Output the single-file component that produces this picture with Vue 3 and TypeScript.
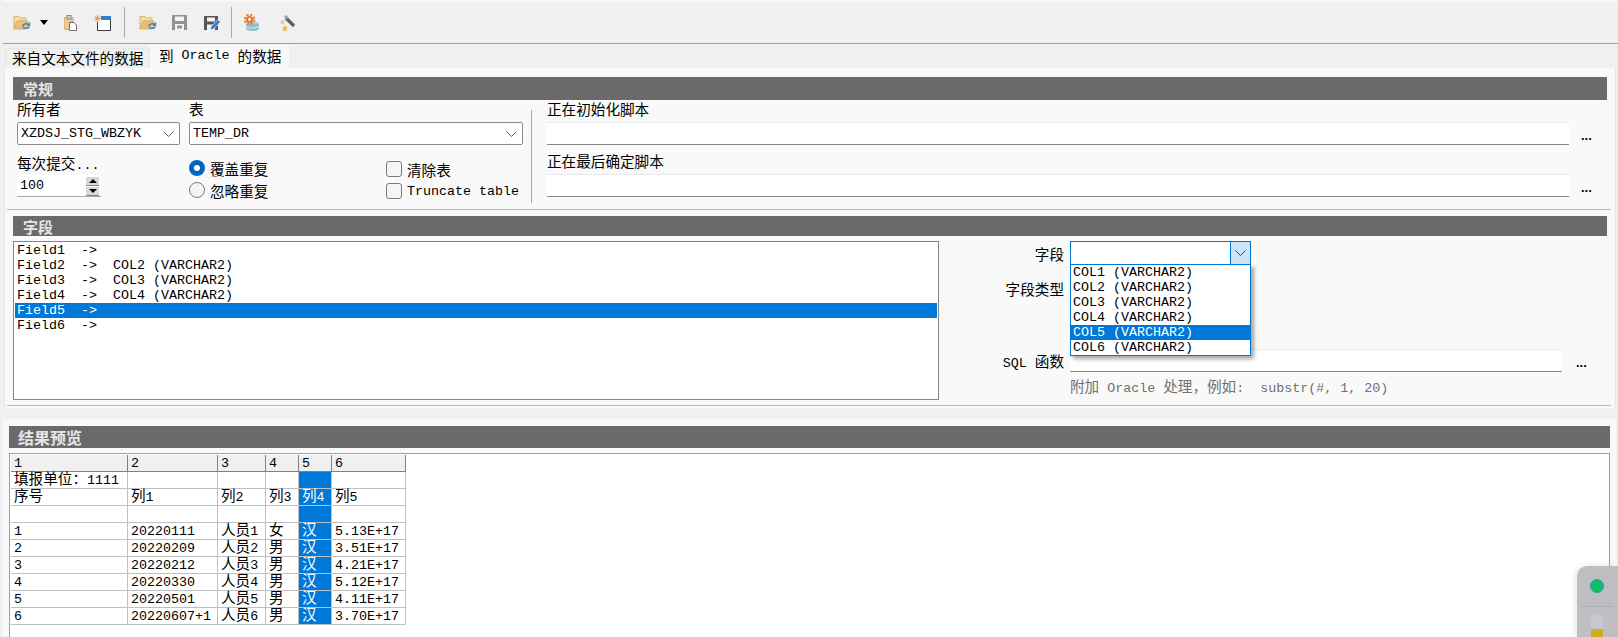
<script setup lang="ts">
type Seg = { t: string; c: string }
const segs = (text: string): Seg[] => {
  const out: Seg[] = []
  for (const m of text.matchAll(/[\u3000-\u9fff\uff00-\uffef]+|[^\u3000-\u9fff\uff00-\uffef]+/g)) {
    out.push({ t: m[0], c: /[\u3000-\u9fff\uff00-\uffef]/.test(m[0]) ? 'cjk' : 'lat' })
  }
  return out
}
const fields = [
  'Field1  ->',
  'Field2  ->  COL2 (VARCHAR2)',
  'Field3  ->  COL3 (VARCHAR2)',
  'Field4  ->  COL4 (VARCHAR2)',
  'Field5  ->',
  'Field6  ->',
]
const cols = ['COL1', 'COL2', 'COL3', 'COL4', 'COL5', 'COL6'].map((c) => `${c} (VARCHAR2)`)
const widths = [117, 90, 48, 33, 33, 74]
const head = ['1', '2', '3', '4', '5', '6']
const rows = [
  ['填报单位：1111', '', '', '', '', ''],
  ['序号', '列1', '列2', '列3', '列4', '列5'],
  ['', '', '', '', '', ''],
  ['1', '20220111', '人员1', '女', '汉', '5.13E+17'],
  ['2', '20220209', '人员2', '男', '汉', '3.51E+17'],
  ['3', '20220212', '人员3', '男', '汉', '4.21E+17'],
  ['4', '20220330', '人员4', '男', '汉', '5.12E+17'],
  ['5', '20220501', '人员5', '男', '汉', '4.11E+17'],
  ['6', '20220607+1', '人员6', '男', '汉', '3.70E+17'],
]
</script>

<template>
  <div class="app">
    <div class="toolbar">
      <svg class="ic folder" width="18" height="15" viewBox="0 0 18 15">
        <path d="M1 3.5V1.5H6L7.5 3H13V6H5L1 14Z" fill="#f3dcae" stroke="#dcb168" />
        <path d="M1 14L4 6H15L12.5 14Z" fill="#e9bf78" stroke="#dcb168" />
        <path d="M9.5 11.5C10.5 8.5 13.5 8 16 9.5M16.5 7.5V10H14M10 12.5C12 14 15 13.5 16.5 11.5" fill="none" stroke="#2f7fc1" stroke-width="1.4" />
      </svg>
      <span class="caret"></span>
      <svg class="ic clip" width="13" height="16" viewBox="0 0 13 16">
        <path d="M0.5 2.5H9.5V7H5.5V14.5H0.5Z" fill="#eccb92" stroke="#ddb574" />
        <rect x="3" y="0.5" width="4" height="3.5" fill="#d5d5d5" stroke="#8a8a8a" />
        <path d="M5.5 7.5H10L12.5 10V15.5H5.5Z" fill="#fff" stroke="#707070" />
      </svg>
      <svg class="ic newwin" width="17" height="16" viewBox="0 0 17 16">
        <rect x="3.5" y="3.5" width="13" height="12" fill="#fff" stroke="#3c3c3c" />
        <rect x="7" y="1" width="10" height="4" fill="#2f80c8" />
        <path d="M3.5 0V7M0 3.5H7M1 1L6 6M6 1L1 6" stroke="#ee9c3c" stroke-width="1" />
      </svg>
      <i class="tsep"></i>
      <svg class="ic folder2" width="18" height="15" viewBox="0 0 18 15">
        <path d="M1 3.5V1.5H6L7.5 3H13V6H5L1 14Z" fill="#f3dcae" stroke="#dcb168" />
        <path d="M1 14L4 6H15L12.5 14Z" fill="#e9bf78" stroke="#dcb168" />
        <path d="M9.5 11.5C10.5 8.5 13.5 8 16 9.5M16.5 7.5V10H14M10 12.5C12 14 15 13.5 16.5 11.5" fill="none" stroke="#2f7fc1" stroke-width="1.4" />
      </svg>
      <svg class="ic save" width="15" height="15" viewBox="0 0 15 15">
        <path d="M0 0H15V15H0Z" fill="#8f9396" />
        <rect x="3" y="1.5" width="9" height="4.5" fill="#f4f4f4" />
        <rect x="3" y="9" width="9" height="6" fill="#f4f4f4" />
        <rect x="5" y="10.5" width="5" height="3" fill="#8f9396" />
      </svg>
      <svg class="ic saveas" width="17" height="16" viewBox="0 0 17 16">
        <path d="M0 1H14V15H0Z" fill="#545658" />
        <rect x="3" y="2.5" width="8" height="4" fill="#f4f4f4" />
        <rect x="3" y="9.5" width="8" height="5.5" fill="#f4f4f4" />
        <path d="M6 15L7 11.5L14 4.5L16.5 7L9.5 14Z" fill="#2f80c8" stroke="#fff" stroke-width=".7" />
      </svg>
      <i class="tsep sep2"></i>
      <svg class="ic dbgear" width="15" height="17" viewBox="0 0 15 17">
        <ellipse cx="8.5" cy="10" rx="6.5" ry="3" fill="#a9d2dc" />
        <path d="M2 10V14.5C2 16 5 17 8.5 17S15 16 15 14.5V10Z" fill="#8fc2cf" />
        <path d="M2 12.5C4 14.5 12 14.5 15 12.5" fill="none" stroke="#d4ebf0" />
        <circle cx="5.5" cy="5.5" r="3.6" fill="#e8752a" />
        <circle cx="5.5" cy="5.5" r="4.8" fill="none" stroke="#e8752a" stroke-width="1.8" stroke-dasharray="2 1.8" />
        <circle cx="5.5" cy="5.5" r="1.4" fill="#fff" />
      </svg>
      <svg class="ic wand" width="17" height="16" viewBox="0 0 17 16">
        <path d="M7 3L15 11" stroke="#5a5e66" stroke-width="3.2" />
        <path d="M6 1L8.5 3.5" stroke="#9a9ea6" stroke-width="3" />
        <path d="M3.5 4L4.3 6.2H6.5L4.8 7.5L5.4 9.6L3.5 8.4L1.6 9.6L2.2 7.5L.5 6.2H2.7Z" fill="#f1c861" />
        <path d="M6 9.5L6.9 12H9.4L7.4 13.4L8.1 16H6L3.9 16L4.6 13.4L2.6 12H5.1Z" fill="#eebb4d" />
      </svg>
    </div>

    <div class="tabs">
      <div class="tab off"><span class="cjk">来自文本文件的数据</span></div>
      <div class="tab on">
        <span v-for="(s, i) in segs('到 Oracle 的数据')" :key="i" :class="s.c">{{ s.t }}</span>
      </div>
    </div>

    <div class="panel first">
      <div class="sec">
        <div class="bar cap"><span>常规</span></div>
        <div class="general">
          <div class="g-left">
            <div class="g-top">
              <div class="owner">
                <div class="lab cjk">所有者</div>
                <div class="combo"><span class="lat">XZDSJ_STG_WBZYK</span><svg class="chev" width="11" height="6" viewBox="0 0 11 6"><path d="M.5 .5L5.5 5.5L10.5 .5" fill="none" stroke="#606060" /></svg></div>
              </div>
              <div class="tbl">
                <div class="lab cjk">表</div>
                <div class="combo"><span class="lat">TEMP_DR</span><svg class="chev" width="11" height="6" viewBox="0 0 11 6"><path d="M.5 .5L5.5 5.5L10.5 .5" fill="none" stroke="#606060" /></svg></div>
              </div>
            </div>
            <div class="g-bot">
              <div class="commit">
                <div class="lab2"><span class="cjk">每次提交</span><span class="lat">...</span></div>
                <div class="spin">
                  <span class="lat">100</span>
                  <div class="spin-btns">
                    <b class="up"></b>
                    <b class="down"></b>
                  </div>
                </div>
              </div>
              <div class="radios">
                <div class="opt"><i class="radio checked"></i><span class="cjk">覆盖重复</span></div>
                <div class="opt"><i class="radio"></i><span class="cjk">忽略重复</span></div>
              </div>
              <div class="checks">
                <div class="opt"><i class="check"></i><span class="cjk">清除表</span></div>
                <div class="opt"><i class="check"></i><span class="lat">Truncate table</span></div>
              </div>
            </div>
          </div>
          <i class="vsep"></i>
          <div class="g-right">
            <div class="lab cjk script-lab">正在初始化脚本</div>
            <div class="script-row"><div class="input"></div><span class="more">...</span></div>
            <div class="lab cjk script-lab second">正在最后确定脚本</div>
            <div class="script-row"><div class="input"></div><span class="more">...</span></div>
          </div>
        </div>
      </div>

      <div class="sec fields-sec">
        <div class="bar short"><span>字段</span></div>
        <div class="fields">
          <div class="listbox lat">
            <div v-for="(f, i) in fields" :key="i" class="item" :class="{ sel: i === 4 }">{{ f }}</div>
          </div>
          <div class="form">
            <div class="f-row r1">
              <label class="cjk">字段</label>
              <div class="open-combo">
                <div class="open-btn">
                  <svg width="11" height="6" viewBox="0 0 11 6"><path d="M.5 .5L5.5 5.5L10.5 .5" fill="none" stroke="#404040" /></svg>
                </div>
                <div class="popup lat">
                  <div v-for="(c, i) in cols" :key="c" class="pop-item" :class="{ sel: i === 4 }">{{ c }}</div>
                </div>
              </div>
            </div>
            <div class="f-row r2"><label class="cjk">字段类型</label></div>
            <div class="f-row r3">
              <label><span v-for="(s, i) in segs('SQL 函数')" :key="i" :class="s.c">{{ s.t }}</span></label>
              <div class="input sql"></div>
              <span class="more">...</span>
            </div>
            <div class="hint">
              <span v-for="(s, i) in segs('附加 Oracle 处理，例如:  substr(#, 1, 20)')" :key="i" :class="s.c">{{ s.t }}</span>
            </div>
          </div>
        </div>
      </div>
    </div>

    <div class="panel preview">
      <div class="bar big"><span>结果预览</span></div>
      <div class="gridbox">
        <table class="grid">
          <colgroup>
            <col v-for="(w, i) in widths" :key="i" :style="{ width: w + 'px' }" />
          </colgroup>
          <thead>
            <tr>
              <th v-for="h in head" :key="h"><span class="lat">{{ h }}</span></th>
            </tr>
          </thead>
          <tbody>
            <tr v-for="(r, ri) in rows" :key="ri">
              <td v-for="(c, ci) in r" :key="ci" :class="{ sel: ci === 4 }">
                <span v-for="(s, si) in segs(c)" :key="si" :class="s.c">{{ s.t }}</span>
              </td>
            </tr>
          </tbody>
        </table>
      </div>
    </div>

    <div class="widget">
      <i class="dot"></i>
      <i class="rule"></i>
      <div class="pill"><i class="level"></i></div>
    </div>
  </div>
</template>

<style>
html, body { margin: 0; overflow: hidden; }
</style>

<style scoped>
.app {
  position: relative;
  width: 1618px;
  height: 637px;
  overflow: hidden;
  background: #f0f0f0;
  color: #000;
  font-family: "Liberation Mono", "Noto Sans CJK SC", monospace;
  font-size: 13.33px;
}
.lat { font-family: "Liberation Mono", monospace; font-size: 13.33px; white-space: pre; }
.cjk { font-family: "Noto Sans CJK SC", sans-serif; font-size: 14.6px; white-space: pre; }

.toolbar {
  height: 41px;
  margin-left: 3px;
  border-top: 2px solid #f8f8f8;
  border-bottom: 1px solid #a0a0a0;
  display: flex;
  align-items: center;
  box-sizing: content-box;
}
.ic { flex: none; display: block; }
.folder { margin-left: 10px; }
.caret {
  margin-left: 9px;
  width: 0;
  height: 0;
  border: 4.5px solid transparent;
  border-top: 5px solid #000;
  border-bottom: 0;
}
.clip { margin-left: 16px; }
.newwin { margin-left: 17px; }
.tsep { width: 1px; height: 31px; margin-left: 13px; background: #a8a8a8; flex: none; }
.folder2 { margin-left: 14px; }
.save { margin-left: 15px; }
.saveas { margin-left: 17px; }
.sep2 { margin-left: 10px; }
.dbgear { margin-left: 12px; }
.wand { margin-left: 20px; }

.tabs { height: 24px; display: flex; align-items: flex-end; padding-left: 5px; }
.tab { box-sizing: border-box; display: flex; align-items: center; }
.tab.off { width: 145px; height: 20px; padding: 0 0 2px 6px; border: 1px solid #e6e6e6; border-bottom: 0; background: #f0f0f0; }
.tab.on { width: 139px; height: 23px; padding: 0 0 2px 9px; background: #f9f9f9; }

.panel { background: #f9f9f9; box-sizing: border-box; }
.first {
  margin-left: 4px;
  margin-right: 2px;
  height: 340px;
  padding: 9px 0 0 0;
  border-left: 1px solid #e6e6e6;
  border-right: 1px solid #e6e6e6;
}
.sec { margin: 0 4px 0 2px; padding: 0 4px 0 6px; border-bottom: 1px solid #bcbcbc; }
.bar {
  background: #6a6a6a;
  color: #e6e6e6;
  font-family: "Noto Sans CJK SC", sans-serif;
  font-weight: 700;
  display: flex;
  align-items: center;
  font-size: 15px;
}
.cap { height: 23px; padding-left: 10px; }
.short { height: 20px; padding-left: 10px; }
.big { height: 22px; padding-left: 9px; font-size: 16px; }

.general { height: 109px; display: flex; }
.g-left { width: 513px; padding-left: 4px; box-sizing: border-box; }
.g-top { display: flex; gap: 9px; }
.owner { width: 163px; }
.tbl { width: 334px; }
.lab { height: 22px; line-height: 18px; }
.combo {
  position: relative;
  box-sizing: border-box;
  height: 23px;
  line-height: 21px;
  padding-left: 3px;
  background: #fff;
  border: 1px solid #8c8c8c;
  border-radius: 2px;
}
.chev { position: absolute; right: 5px; top: 8px; }
.g-bot { display: flex; margin-top: 6px; }
.commit { width: 172px; }
.lab2 { height: 24px; line-height: 24px; }
.spin {
  box-sizing: border-box;
  width: 84px;
  height: 22px;
  position: relative;
  display: flex;
  align-items: center;
  padding-left: 3px;
  background: #fff;
  border-bottom: 1px solid #a8a8a8;
}
.spin-btns { position: absolute; right: 2px; top: 2px; display: flex; flex-direction: column; gap: 1px; }
.spin-btns b {
  width: 13px;
  height: 8px;
  background: #d8d8d8;
  border-bottom: 1px solid #888;
  display: flex;
  align-items: center;
  justify-content: center;
}
.spin-btns b::after { content: ""; width: 0; height: 0; border: 4px solid transparent; }
.up::after { border-top: 0 !important; border-bottom: 4px solid #000 !important; }
.down::after { border-bottom: 0 !important; border-top: 4px solid #000 !important; }
.radios { width: 197px; padding-top: 6px; }
.checks { padding-top: 7px; }
.opt { height: 22px; display: flex; align-items: center; gap: 5px; }
.radio, .check { display: block; flex: none; box-sizing: border-box; width: 16px; height: 16px; background: #f5f5f5; border: 1px solid #7a7a7a; }
.radio { border-radius: 50%; }
.radio.checked { background: #fff; border: 5px solid #0067c0; }
.check { border-radius: 3px; }
.vsep { flex: none; width: 1px; height: 93px; margin: 10px 0 0 5px; background: #a8a8a8; }
.g-right { flex: 1; padding-left: 15px; padding-right: 0; }
.script-lab { height: 22px; line-height: 17px; }
.script-row { display: flex; align-items: center; height: 23px; }
.second { margin-top: 7px; }
.input {
  flex: none;
  width: 1022px;
  height: 23px;
  box-sizing: border-box;
  background: #fff;
  border-top: 1px solid #eaeaea;
  border-bottom: 1px solid #858585;
}
.more { margin-left: 12px; font-family: "Liberation Sans", sans-serif; font-size: 13px; font-weight: 700; letter-spacing: 0; line-height: 1; position: relative; top: 2px; }

.fields-sec { margin-top: 6px; }
.fields { height: 169px; display: flex; }
.listbox {
  box-sizing: border-box;
  width: 926px;
  height: 159px;
  margin-top: 5px;
  padding: 1px;
  background: #fff;
  border: 1px solid #858585;
}
.item { height: 15px; line-height: 15px; padding-left: 2px; white-space: pre; }
.sel { background: #0078d7; color: #fff; }
.form { flex: 1; padding-top: 5px; }
.f-row { display: flex; align-items: center; position: relative; }
.f-row label { width: 125px; text-align: right; margin-right: 6px; flex: none; }
.r1 { height: 24px; z-index: 2; }
.r2 { height: 20px; margin-top: 13px; }
.r3 { height: 23px; margin-top: 51px; }
.open-combo {
  position: relative;
  box-sizing: border-box;
  width: 181px;
  height: 24px;
  background: #fff;
  border: 1px solid #0078d7;
}
.open-btn {
  position: absolute;
  right: 0;
  top: 0;
  bottom: 0;
  width: 19px;
  background: #cce4f7;
  border-left: 1px solid #0078d7;
  display: flex;
  align-items: center;
  justify-content: center;
}
.popup {
  position: absolute;
  left: -1px;
  top: 22px;
  width: 181px;
  box-sizing: border-box;
  background: #fff;
  border: 1px solid #0078d7;
  box-shadow: 3px 3px 4px rgba(0, 0, 0, 0.35);
}
.pop-item { height: 15px; line-height: 15px; padding-left: 2px; white-space: pre; }
.sql { width: 492px; height: 23px; }
.r3 .more { margin-left: 14px; }
.hint { margin: 4px 0 0 131px; height: 20px; line-height: 20px; color: #707070; white-space: pre; }

.preview {
  margin: 11px 0 0 3px;
  height: 218px;
  padding: 6px 6px 0 6px;
  width: 1613px;
  border-top: 1px solid #fafafa;
}
.gridbox {
  box-sizing: border-box;
  height: 190px;
  margin-top: 5px;
  padding: 1px 0 0 1px;
  background: #fff;
  border: 1px solid #a0a0a0;
  margin-right: 0;
}
.grid { border-collapse: separate; border-spacing: 0; table-layout: fixed; width: 395px; }
.grid th, .grid td {
  box-sizing: border-box;
  height: 17px;
  padding: 2px 0 0 3px;
  font-size: 13.33px;
  line-height: 14px;
  white-space: nowrap;
  text-align: left;
  vertical-align: top;
  font-weight: 400;
  border-right: 1px solid #c0c0c0;
  border-bottom: 1px solid #c0c0c0;
}
.grid .lat, .grid .cjk { line-height: 0; }
.grid th { background: #f0f0f0; border-right-color: #808080; border-bottom-color: #808080; }
.grid td.sel { background: #0078d7; color: #fff; }

.widget {
  position: absolute;
  right: 0;
  top: 566px;
  width: 41px;
  height: 71px;
  background: rgba(186, 187, 192, 0.95);
  border-radius: 10px 0 0 0;
  box-shadow: -2px 0 6px rgba(0, 0, 0, 0.1);
}
.dot {
  position: absolute;
  left: 13px;
  top: 13px;
  width: 14px;
  height: 14px;
  box-sizing: border-box;
  border-radius: 50%;
  background: #0cc06a;
  border: 1px solid #3f8fb0;
}
.rule { position: absolute; left: 4px; right: 4px; top: 40px; height: 1px; background: #adafb3; }
.pill { position: absolute; left: 14px; top: 48px; width: 12px; height: 30px; border-radius: 6px 6px 0 0; background: #c9c9cd; overflow: hidden; }
.level { position: absolute; left: 0; right: 0; top: 15px; height: 15px; background: linear-gradient(#dcab14, #a8b830); }
</style>
